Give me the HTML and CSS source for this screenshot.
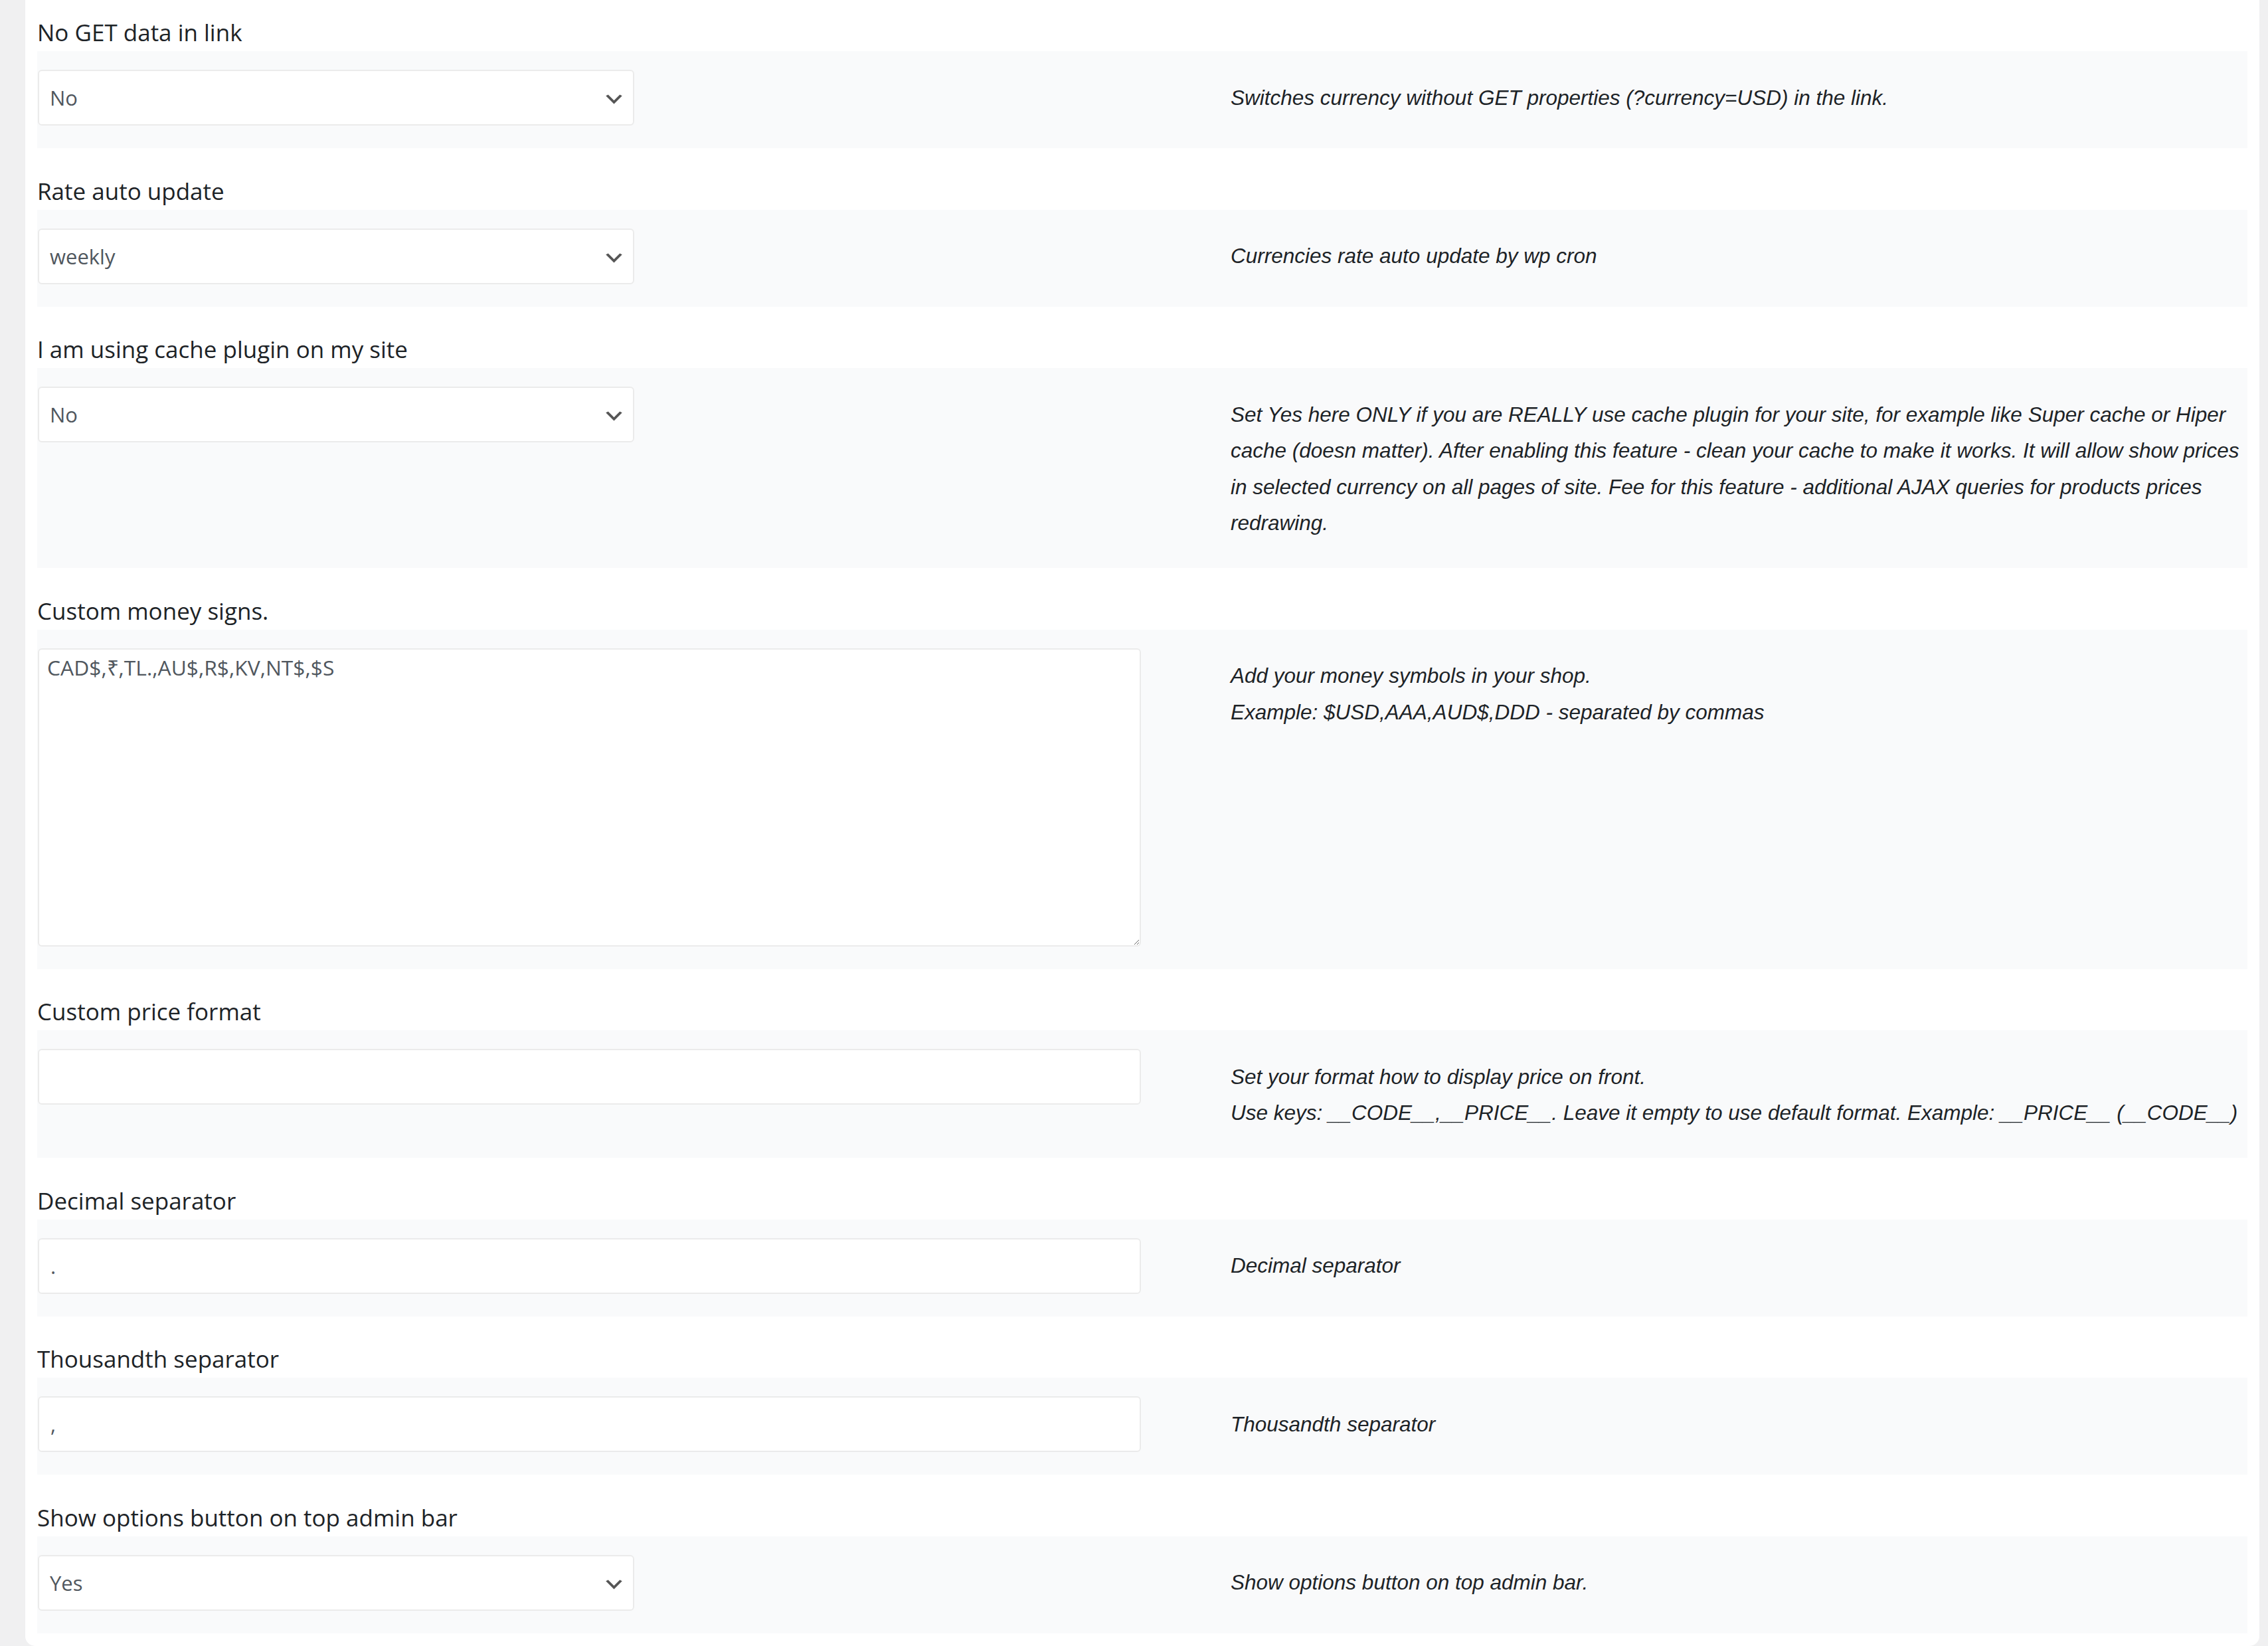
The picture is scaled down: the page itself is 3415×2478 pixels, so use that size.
FILE: index.html
```html
<!DOCTYPE html>
<html lang="en">
<head>
    <meta charset="UTF-8">
    <meta name="viewport" content="width=device-width, initial-scale=1.0">
    <title>Currency options</title>
    <link rel="stylesheet" href="styles.css">
</head>
<body>

    <div class="options-card">

        <!-- No GET data in link -->
        <div class="option">
            <label class="option-label" for="no_get_data">No GET data in link</label>
            <div class="option-row">
                <div class="option-control">
                    <div class="select-wrap">
                        <select id="no_get_data" class="option-select">
                            <option selected>No</option>
                            <option>Yes</option>
                        </select>
                        <svg class="select-arrow" viewBox="0 0 20 20"><path d="M5 6l5 5 5-5 2 1-7 7-7-7 2-1z"/></svg>
                    </div>
                </div>
                <p class="option-desc">Switches currency without GET properties (?currency=USD) in the link.</p>
            </div>
        </div>

        <!-- Rate auto update -->
        <div class="option">
            <label class="option-label" for="rate_auto_update">Rate auto update</label>
            <div class="option-row">
                <div class="option-control">
                    <div class="select-wrap">
                        <select id="rate_auto_update" class="option-select">
                            <option>no auto update</option>
                            <option>hourly</option>
                            <option>twicedaily</option>
                            <option>daily</option>
                            <option selected>weekly</option>
                            <option>monthly</option>
                        </select>
                        <svg class="select-arrow" viewBox="0 0 20 20"><path d="M5 6l5 5 5-5 2 1-7 7-7-7 2-1z"/></svg>
                    </div>
                </div>
                <p class="option-desc">Currencies rate auto update by wp cron</p>
            </div>
        </div>

        <!-- Cache plugin -->
        <div class="option">
            <label class="option-label" for="cache_plugin">I am using cache plugin on my site</label>
            <div class="option-row">
                <div class="option-control">
                    <div class="select-wrap">
                        <select id="cache_plugin" class="option-select">
                            <option selected>No</option>
                            <option>Yes</option>
                        </select>
                        <svg class="select-arrow" viewBox="0 0 20 20"><path d="M5 6l5 5 5-5 2 1-7 7-7-7 2-1z"/></svg>
                    </div>
                </div>
                <p class="option-desc">Set Yes here ONLY if you are REALLY use cache plugin for your site, for example like Super cache or Hiper cache (doesn matter). After enabling this feature - clean your cache to make it works. It will allow show prices in selected currency on all pages of site. Fee for this feature - additional AJAX queries for products prices redrawing.</p>
            </div>
        </div>

        <!-- Custom money signs -->
        <div class="option">
            <label class="option-label" for="money_signs">Custom money signs.</label>
            <div class="option-row">
                <div class="option-control">
                    <textarea id="money_signs" class="option-textarea">CAD$,₹,TL.,AU$,R$,KV,NT$,$S</textarea>
                </div>
                <p class="option-desc">Add your money symbols in your shop.<br>Example: $USD,AAA,AUD$,DDD - separated by commas</p>
            </div>
        </div>

        <!-- Custom price format -->
        <div class="option">
            <label class="option-label" for="price_format">Custom price format</label>
            <div class="option-row">
                <div class="option-control">
                    <input type="text" id="price_format" class="option-input" value="">
                </div>
                <p class="option-desc">Set your format how to display price on front.<br>Use keys: __CODE__,__PRICE__. Leave it empty to use default format. Example: __PRICE__ (__CODE__)</p>
            </div>
        </div>

        <!-- Decimal separator -->
        <div class="option">
            <label class="option-label" for="decimal_sep">Decimal separator</label>
            <div class="option-row">
                <div class="option-control">
                    <input type="text" id="decimal_sep" class="option-input" value=".">
                </div>
                <p class="option-desc">Decimal separator</p>
            </div>
        </div>

        <!-- Thousandth separator -->
        <div class="option">
            <label class="option-label" for="thousand_sep">Thousandth separator</label>
            <div class="option-row">
                <div class="option-control">
                    <input type="text" id="thousand_sep" class="option-input" value=",">
                </div>
                <p class="option-desc">Thousandth separator</p>
            </div>
        </div>

        <!-- Admin bar button -->
        <div class="option">
            <label class="option-label" for="admin_bar">Show options button on top admin bar</label>
            <div class="option-row">
                <div class="option-control">
                    <div class="select-wrap">
                        <select id="admin_bar" class="option-select">
                            <option>No</option>
                            <option selected>Yes</option>
                        </select>
                        <svg class="select-arrow" viewBox="0 0 20 20"><path d="M5 6l5 5 5-5 2 1-7 7-7-7 2-1z"/></svg>
                    </div>
                </div>
                <p class="option-desc">Show options button on top admin bar.</p>
            </div>
        </div>

    </div>

</body>
</html>
```

FILE: styles.css
```css
body {
    margin: 0;
    padding: 0 13px 0 38px;
    background: #f0f0f1;
    font-family: "Open Sans", Arial, sans-serif;
    color: #1d2327;
}

/* White settings panel */
.options-card {
    background: #fff;
    border-radius: 0 0 15px 15px;
    padding: 0 18px 19px;
}

/* Field title above each row */
.option-label {
    display: block;
    font-size: 35px;
    line-height: 48px;
    padding: 40.5px 0 4px;
    color: #1d2327;
}
.option:first-child .option-label {
    padding-top: 25px;
}

/* Control + description row */
.option-row {
    display: grid;
    grid-template-columns: 1fr 1fr;
    background: #f9fafb;
}
.option-control {
    padding: 28px 2px 34px 1px;
}
.option-desc {
    margin: 0;
    padding: 42.5px 8px 40.5px 133px;
    font-family: "Liberation Sans", Arial, sans-serif;
    font-style: italic;
    font-size: 31.5px;
    line-height: 54.5px;
    color: #1d2327;
}

/* Form controls */
.option-select,
.option-input,
.option-textarea {
    box-sizing: border-box;
    font-family: "Open Sans", Arial, sans-serif;
    font-size: 31px;
    color: #50575e;
    background: #fff;
    border: 2px solid #ebebeb;
    border-radius: 6px;
    outline: none;
}
.select-wrap {
    position: relative;
    width: 898px;
}
.option-select {
    -webkit-appearance: none;
    appearance: none;
    width: 100%;
    height: 84px;
    padding: 0 60px 0 16px;
}
.select-arrow {
    position: absolute;
    right: 13px;
    top: 27px;
    width: 35px;
    height: 35px;
    fill: #555;
    pointer-events: none;
}
.option-input {
    width: 100%;
    height: 84px;
    padding: 0 17px;
}
.option-textarea {
    display: block;
    width: 100%;
    height: 449px;
    padding: 5px 12px;
    font-size: 31.8px;
    line-height: normal;
    resize: vertical;
}
```
